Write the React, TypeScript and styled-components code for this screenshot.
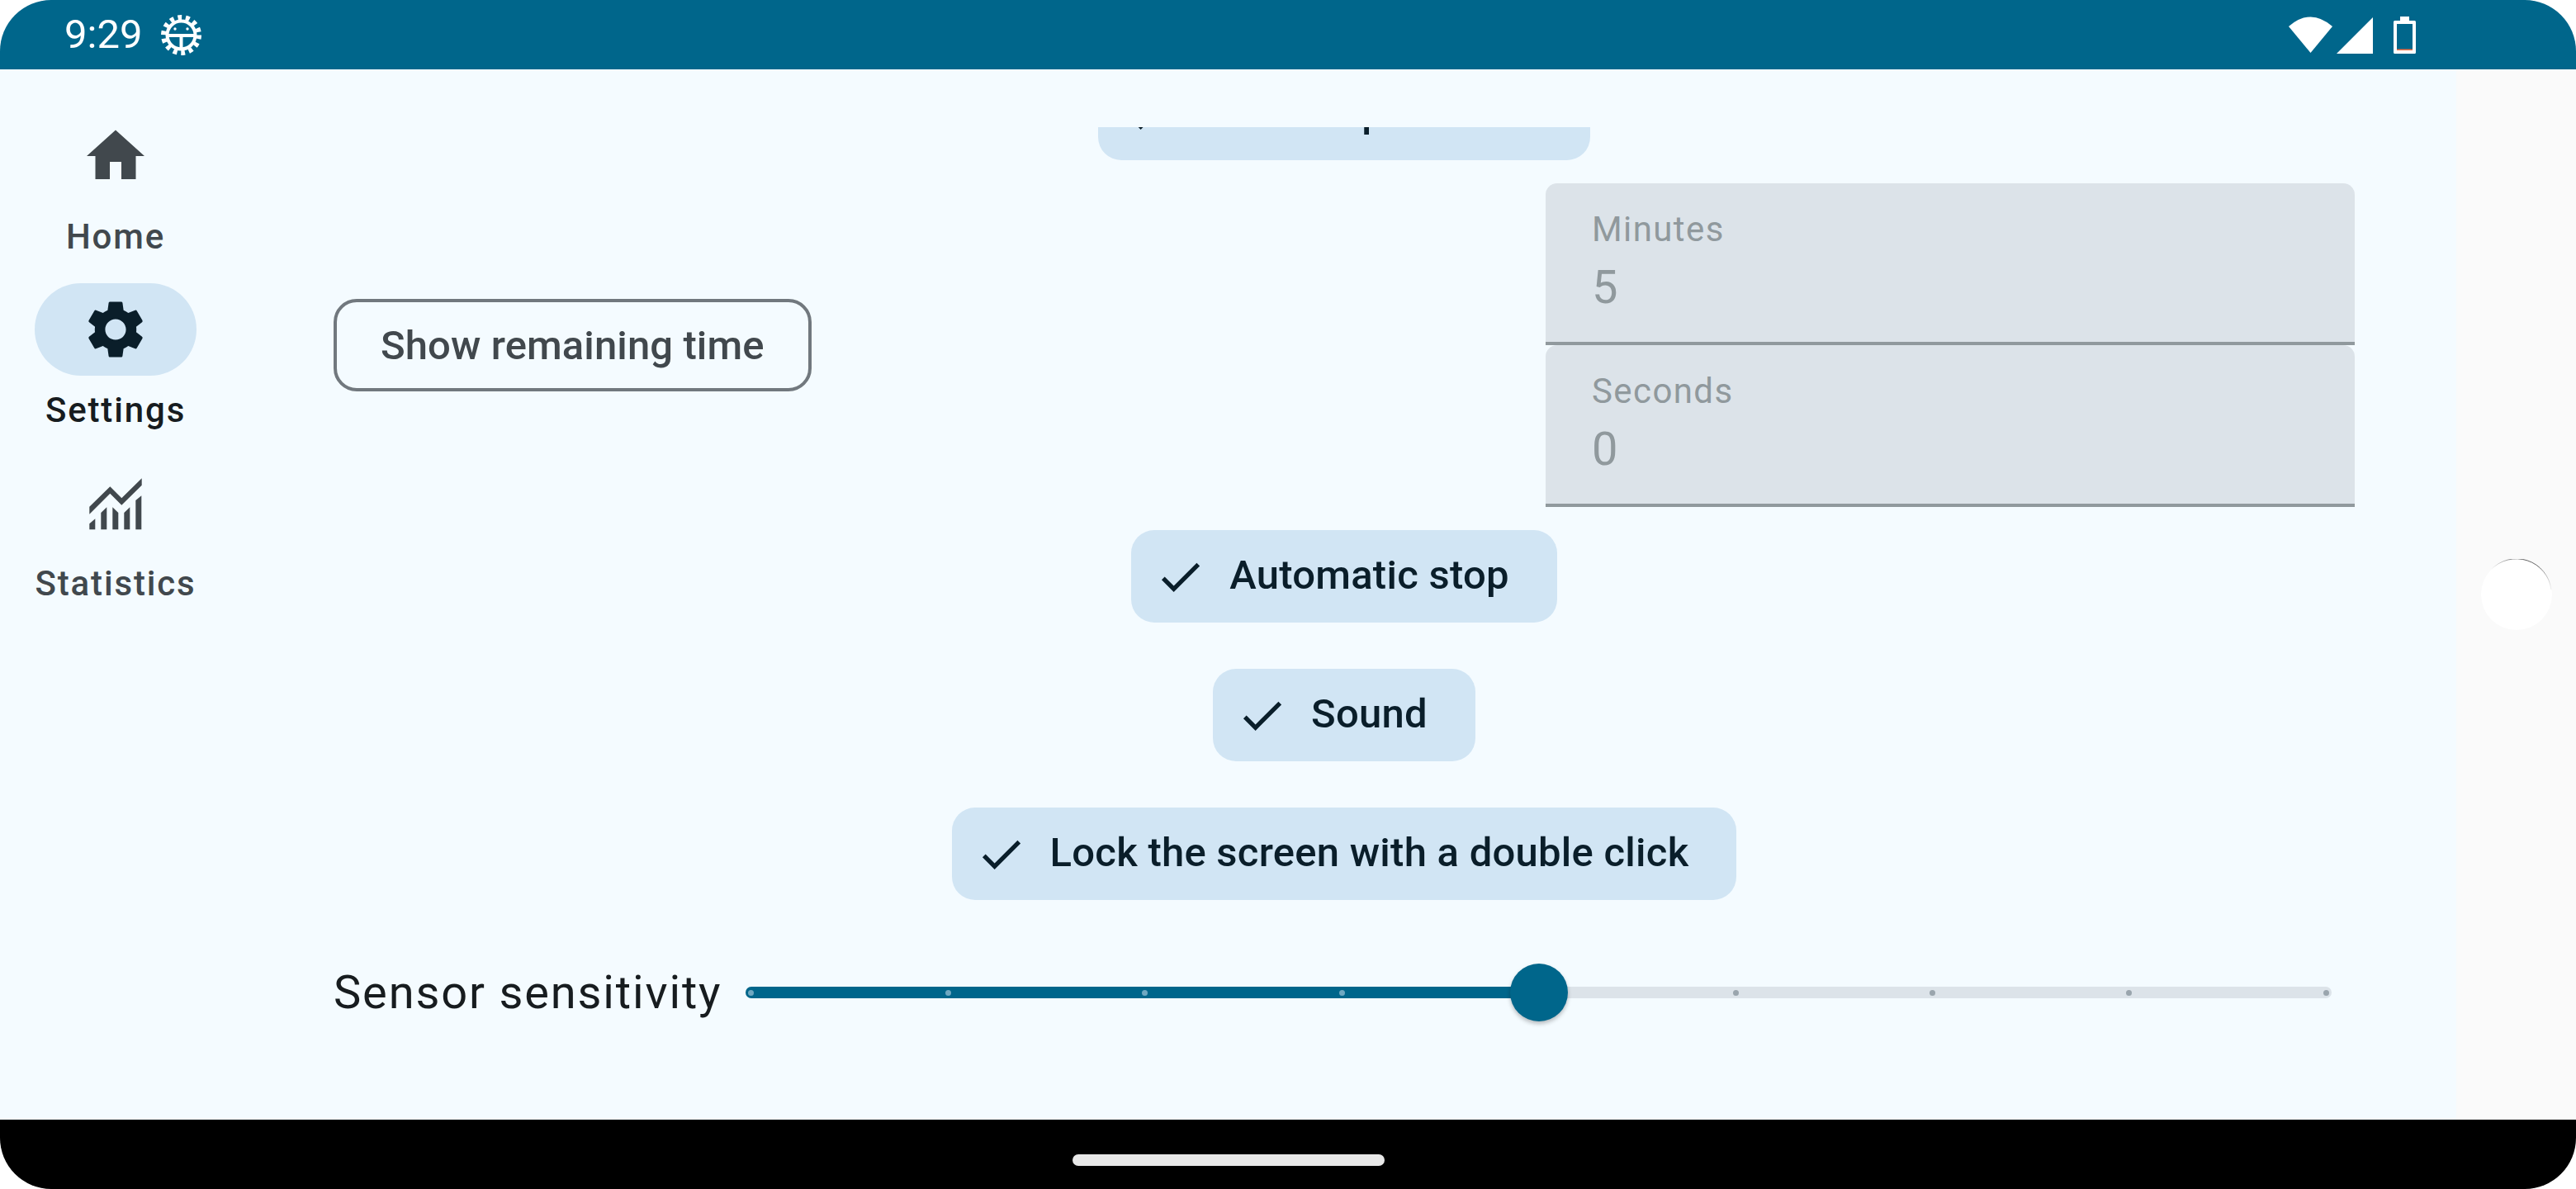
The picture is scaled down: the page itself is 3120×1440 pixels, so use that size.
import React from 'react'
import styled, { createGlobalStyle } from 'styled-components'
import { MdCheck, MdHome, MdSettings } from 'react-icons/md'

const GlobalStyle = createGlobalStyle`
  html, body {
    margin: 0;
    padding: 0;
    background: #ffffff;
  }
  * {
    box-sizing: border-box;
  }
`

const Device = styled.div`
  width: 3120px;
  height: 1440px;
  display: flex;
  flex-direction: column;
  overflow: hidden;
  border-radius: 62px;
  font-family: Roboto, "Noto Sans", sans-serif;
`

const StatusBar = styled.header`
  height: 84px;
  flex: none;
  display: flex;
  align-items: center;
  padding: 0 194px 0 78px;
  background: #00668b;
  color: #ffffff;
`

const Clock = styled.span`
  font-size: 49px;
  line-height: 84px;
  margin-right: 23px;
`

const StatusIcons = styled.div`
  margin-left: auto;
  display: flex;
  align-items: center;
`

const SignalIcon = styled.svg`
  margin: 2px 25px 0 5px;
`

const Main = styled.div`
  flex: 1;
  min-height: 0;
  display: flex;
`

const Screen = styled.div`
  width: 2975px;
  display: flex;
  background: #f4fbff;
`

const Rail = styled.nav`
  width: 280px;
  flex: none;
  display: flex;
  flex-direction: column;
  align-items: center;
  gap: 28px;
  padding-top: 49px;
`

const RailItem = styled.div`
  display: flex;
  flex-direction: column;
  align-items: center;
  gap: 14px;
`

const RailPill = styled.div<{ $active?: boolean }>`
  width: 196px;
  height: 112px;
  display: flex;
  align-items: center;
  justify-content: center;
  border-radius: 56px;
  background: ${p => (p.$active ? '#d1e5f4' : 'transparent')};
  color: ${p => (p.$active ? '#0a1e2a' : '#41484d')};
`

const RailLabel = styled.span<{ $active?: boolean }>`
  font-size: 42px;
  font-weight: 500;
  line-height: 56px;
  letter-spacing: 1.85px;
  color: ${p => (p.$active ? '#171c1f' : '#41484d')};
`

const Viewport = styled.main`
  flex: 1;
  min-width: 0;
  margin-top: 70px;
  overflow: hidden;
`

const Content = styled.div`
  display: flex;
  flex-direction: column;
  align-items: center;
  gap: 28px;
  margin-top: -72px;
  padding: 0 123px 0 124px;
`

const Chip = styled.div`
  height: 112px;
  display: flex;
  align-items: center;
  gap: 28px;
  padding: 0 58px 0 28px;
  border-radius: 28px;
  background: #d1e5f4;
  color: #0a1e2a;
  font-size: 49px;
  font-weight: 460;
  letter-spacing: 0.25px;
  white-space: nowrap;

  & + & {
    margin-top: 28px;
  }
`

const ChipLabel = styled.span`
  line-height: 56px;
  margin-bottom: 2px;
`

const TimerRow = styled.section`
  align-self: stretch;
  display: flex;
  align-items: center;
  justify-content: space-between;
`

const OutlineButton = styled.button`
  height: 112px;
  padding: 0 53px;
  border: 4px solid #71787e;
  border-radius: 28px;
  background: transparent;
  color: #41484d;
  font-family: inherit;
  font-size: 49px;
  font-weight: 460;
  letter-spacing: 0.1px;
`

const Fields = styled.div`
  width: 980px;
  display: flex;
  flex-direction: column;
`

const Field = styled.div`
  height: 196px;
  padding: 28px 56px 0;
  border-bottom: 4px solid #90999d;
  border-radius: 14px 14px 0 0;
  background: #dce3e9;
  color: #90999d;
`

const FieldLabel = styled.div`
  font-size: 42px;
  line-height: 56px;
  letter-spacing: 1.4px;
`

const FieldValue = styled.div`
  font-size: 56px;
  line-height: 84px;
  letter-spacing: 1.75px;
`

const SliderRow = styled.section`
  align-self: stretch;
  display: flex;
  align-items: center;
  height: 70px;
  margin-top: 49px;
  padding-right: 28px;
`

const SliderLabel = styled.span`
  flex: none;
  margin-right: 29px;
  color: #171c1f;
  font-size: 56px;
  letter-spacing: 1.85px;
  white-space: nowrap;
`

const Track = styled.div`
  position: relative;
  flex: 1;
  height: 14px;
  border-radius: 7px;
  background: #dce3e9;
`

const ActiveTrack = styled.div`
  position: absolute;
  inset: 0 auto 0 0;
  border-radius: 7px 0 0 7px;
  background: #00668b;
`

const Ticks = styled.div`
  position: absolute;
  inset: 0;
  display: flex;
  align-items: center;
  justify-content: space-between;
  padding: 0 3px;
`

const Tick = styled.i<{ $on: boolean }>`
  width: 7px;
  height: 7px;
  border-radius: 50%;
  background: ${p => (p.$on ? '#6fa8c1' : '#9aa5ad')};
`

const Thumb = styled.div`
  position: absolute;
  top: 50%;
  width: 70px;
  height: 70px;
  border-radius: 50%;
  background: #00668b;
  box-shadow: 0 3px 5px rgba(0, 0, 0, 0.25);
  transform: translate(-50%, -50%);
`

const SideStrip = styled.aside`
  flex: 1;
  display: flex;
  align-items: center;
  justify-content: center;
  background: #fafafa;
`

const NavBar = styled.footer`
  height: 84px;
  flex: none;
  display: flex;
  align-items: center;
  justify-content: center;
  padding-right: 144px;
  background: #000000;
`

const HomeHandle = styled.div`
  width: 378px;
  height: 14px;
  margin-top: 14px;
  border-radius: 7px;
  background: #e8e8e8;
`

const SystemGear = () => (
  <svg width="49" height="49" viewBox="0 0 49 49">
    <circle cx="24.5" cy="24.5" r="21.5" fill="none" stroke="#fff" strokeWidth="6" strokeDasharray="4.825 4.825" />
    <circle cx="24.5" cy="24.5" r="17" fill="none" stroke="#fff" strokeWidth="4" />
    <rect x="8" y="23" width="33" height="4" fill="#fff" />
    <rect x="22.5" y="23" width="4" height="19" fill="#fff" />
    <circle cx="17" cy="17" r="1.7" fill="#fff" />
    <circle cx="32" cy="17" r="1.7" fill="#fff" />
  </svg>
)

const WifiIcon = () => (
  <svg width="53" height="44" viewBox="0 0 53 44">
    <path d="M26.5 44 L0 12 Q26.5 -11 53 12 Z" fill="#fff" />
  </svg>
)

const BatteryIcon = () => (
  <svg width="27" height="45" viewBox="0 0 27 45">
    <path
      fillRule="evenodd"
      fill="#fff"
      d="M8 0h11v5h6.500a1.500 1.500 0 0 1 1.500 1.500v37a1.500 1.500 0 0 1-1.500 1.500h-24a1.500 1.500 0 0 1-1.500-1.500v-37a1.500 1.500 0 0 1 1.500-1.500h6.500zM4 9v32h19v-32z"
    />
    <rect x="4" y="39.500" width="19" height="1.500" fill="#ff7043" />
  </svg>
)

// line with a row of bars cut off underneath it
const StatsIcon = () => (
  <svg width="84" height="84" viewBox="-2 -4 84 84" fill="currentColor">
    <polygon points="8.300,42.700 33.300,18.300 47.300,32.300 71.700,8.300 71.700,16.700 47.300,40.700 33.300,26.700 8.300,51.700" />
    <polygon points="8.300,63.300 15.300,57.300 15.300,70.300 8.300,70.300" />
    <polygon points="22.300,50 29.300,43.300 29.300,70.300 22.300,70.300" />
    <polygon points="36.300,43.300 43.300,50 43.300,70.300 36.300,70.300" />
    <polygon points="50.300,50 57.300,43.300 57.300,70.300 50.300,70.300" />
    <polygon points="64.300,35 71.300,29.300 71.300,70.300 64.300,70.300" />
  </svg>
)

const FloatingDot = () => (
  <svg width="86" height="86" viewBox="0 0 86 86">
    <defs>
      <linearGradient id="dotEdge" x1="0" y1="0" x2="1" y2="0">
        <stop offset="0" stopColor="#555" stopOpacity="0" />
        <stop offset="0.45" stopColor="#555" stopOpacity="0.9" />
        <stop offset="0.8" stopColor="#555" stopOpacity="0.9" />
        <stop offset="1" stopColor="#555" stopOpacity="0.1" />
      </linearGradient>
    </defs>
    <circle cx="43" cy="43" r="43" fill="#fff" />
    <path d="M12 13 A42.500 42.500 0 0 1 85 37" fill="none" stroke="url(#dotEdge)" strokeWidth="1" />
  </svg>
)

const navItems = [
  { label: 'Home', icon: <MdHome size={84} /> },
  { label: 'Settings', icon: <MdSettings size={84} />, active: true },
  { label: 'Statistics', icon: <StatsIcon /> },
]

const chips = ['Automatic stop', 'Sound', 'Lock the screen with a double click']

const SENSITIVITY = 50
const tickValues = [0, 12.5, 25, 37.5, 50, 62.5, 75, 87.5, 100]

export default function App() {
  return (
    <>
      <GlobalStyle />
      <Device>
        <StatusBar>
          <Clock>9:29</Clock>
          <SystemGear />
          <StatusIcons>
            <WifiIcon />
            <SignalIcon width="44" height="44" viewBox="0 0 44 44">
              <polygon points="0,44 44,0 44,44" fill="#fff" />
            </SignalIcon>
            <BatteryIcon />
          </StatusIcons>
        </StatusBar>
        <Main>
          <Screen>
            <Rail>
              {navItems.map(item => (
                <RailItem key={item.label}>
                  <RailPill $active={item.active}>{item.icon}</RailPill>
                  <RailLabel $active={item.active}>{item.label}</RailLabel>
                </RailItem>
              ))}
            </Rail>
            <Viewport>
              <Content>
                <Chip>
                  <MdCheck size={63} />
                  <ChipLabel>Show elapsed time</ChipLabel>
                </Chip>
                <TimerRow>
                  <OutlineButton>Show remaining time</OutlineButton>
                  <Fields>
                    <Field>
                      <FieldLabel>Minutes</FieldLabel>
                      <FieldValue>5</FieldValue>
                    </Field>
                    <Field>
                      <FieldLabel>Seconds</FieldLabel>
                      <FieldValue>0</FieldValue>
                    </Field>
                  </Fields>
                </TimerRow>
                {chips.map(label => (
                  <Chip key={label}>
                    <MdCheck size={63} />
                    <ChipLabel>{label}</ChipLabel>
                  </Chip>
                ))}
                <SliderRow>
                  <SliderLabel>Sensor sensitivity</SliderLabel>
                  <Track>
                    <ActiveTrack style={{ width: `${SENSITIVITY}%` }} />
                    <Ticks>
                      {tickValues.map(v => (
                        <Tick key={v} $on={v <= SENSITIVITY} />
                      ))}
                    </Ticks>
                    <Thumb style={{ left: `${SENSITIVITY}%` }} />
                  </Track>
                </SliderRow>
              </Content>
            </Viewport>
          </Screen>
          <SideStrip>
            <FloatingDot />
          </SideStrip>
        </Main>
        <NavBar>
          <HomeHandle />
        </NavBar>
      </Device>
    </>
  )
}
